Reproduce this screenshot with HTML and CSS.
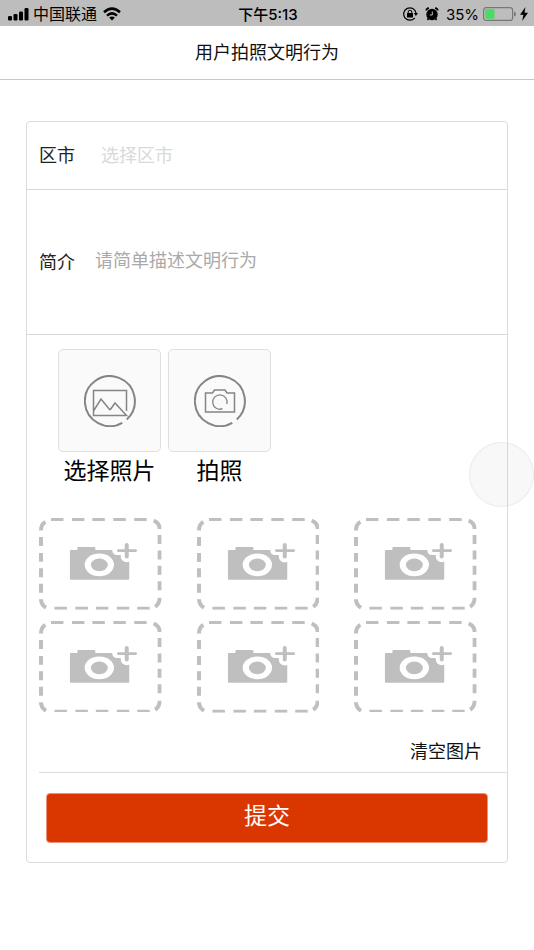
FILE: index.html
```html
<!DOCTYPE html>
<html lang="zh-CN">
<head>
<meta charset="utf-8">
<meta name="viewport" content="width=device-width, initial-scale=1">
<title>用户拍照文明行为</title>
<link rel="stylesheet" href="styles.css">
</head>
<body>
<svg class="defs" aria-hidden="true">
  <symbol id="slot" viewBox="0 0 123 92">
    <g fill="none" stroke="#bfbfbf">
      <path stroke-width="3" d="M12 1.500h12.500M33 1.500h12.500M53.500 1.500h12.500M74.500 1.500h12.500M95.500 1.500h12.500M15.500 90.500h12.500M36.500 90.500h12.500M57 90.500h12.500M78 90.500h12.500M98.500 90.500h12.500"/>
      <path stroke-width="4" d="M2 19v9M2 35v9M2 50.500v9M2 66v9M121 17v9M121 32.500v9M121 48v9M121 63.500v9"/>
      <path stroke-width="4" d="M6.500 4Q2 6 2 12.500M115 2.500Q121 5 121 11M121 80Q121 86 116.500 89M2 81.500Q2 87 7 90"/>
    </g>
    <path fill="#bfbfbf" d="M32 32h6.500v-2q0-1 1-1h16q1 0 1 1v2H89.500q1 0 1 1v28q0 1-1 1H32q-1 0-1-1V33q0-1 1-1z"/>
    <ellipse cx="60.500" cy="47" rx="14.700" ry="11.400" fill="#fff"/>
    <ellipse cx="60.500" cy="47" rx="8.500" ry="6.300" fill="#bfbfbf"/>
    <g fill="none" stroke-linecap="round">
      <path stroke="#fff" stroke-width="9" d="M78 32.700h20"/>
      <path stroke="#fff" stroke-width="12" d="M88 27v11.500"/>
      <path stroke="#bfbfbf" stroke-width="2.600" d="M79.500 32.700h17.500"/>
      <path stroke="#bfbfbf" stroke-width="4" d="M88 27v11.500"/>
    </g>
  </symbol>
</svg>

<div class="status">
  <div class="status-side">
    <svg width="21" height="14" viewBox="0 0 21 14" aria-hidden="true"><rect x="0" y="9" width="4" height="4.500" rx="1.200"/><rect x="5.500" y="7" width="4" height="6.500" rx="1.200"/><rect x="11" y="4.500" width="4" height="9" rx="1.200"/><rect x="16.500" y="1" width="4" height="12.500" rx="1.200"/></svg>
    <span class="carrier">中国联通</span>
    <svg class="wifi" width="18" height="14" viewBox="0 0 18 14" aria-hidden="true"><g fill="none" stroke="#000" stroke-width="2.500"><path d="M1 5.200Q9-2 17 5.200"/><path d="M4 8.700Q9 4 14 8.700"/></g><path d="M9 13.500L6.200 10.700Q9 8.400 11.800 10.700z"/></svg>
  </div>
  <time class="clock">下午5:13</time>
  <div class="status-side status-end">
    <svg width="15" height="14" viewBox="0 0 15 14" aria-hidden="true"><path d="M11.800 10.800A6.200 6.200 0 1 1 13 6" fill="none" stroke="#000" stroke-width="1.200"/><path d="M10.800 6H15l-2.100 3z"/><rect x="4" y="6" width="6" height="4.500" rx=".5"/><path d="M5.200 6.200V5a1.800 1.800 0 0 1 3.600 0v1.200" fill="none" stroke="#000"/></svg>
    <svg class="alarm" width="14" height="14" viewBox="0 0 14 14" aria-hidden="true"><circle cx="7" cy="7.500" r="5.700"/><path d="M1.300 3.500Q1.300 1.200 4 1.100M10 1.100Q12.700 1.200 12.700 3.500M3.500 11.500L2.500 13M10.500 11.500l1 1.500" fill="none" stroke="#000" stroke-width="1.700"/><path d="M7.300 4.500v3.500H4.800" fill="none" stroke="#bdbdbd"/></svg>
    <span class="percent">35%</span>
    <svg width="33" height="14" viewBox="0 0 33 14" aria-hidden="true"><rect x=".6" y=".6" width="29" height="12.800" rx="2.500" fill="none" stroke="#777" stroke-width="1.200"/><rect x="2.300" y="2.300" width="9.200" height="9.400" rx="1" fill="#4cd964"/><path d="M31 4.500q2 .5 2 2.500t-2 2.500z" fill="#777"/></svg>
    <svg width="8" height="14" viewBox="0 0 8 14" aria-hidden="true"><path d="M5.500 0L0 7.800h3.400L2.200 14 8 5.800H4.500z"/></svg>
  </div>
</div>

<header class="topbar"><h1>用户拍照文明行为</h1></header>

<main>
  <form class="card">
    <div class="row row-city">
      <label for="city">区市</label>
      <select id="city" class="city"><option>选择区市</option></select>
    </div>
    <div class="row row-intro">
      <label for="intro">简介</label>
      <textarea id="intro" class="intro" rows="3" placeholder="请简单描述文明行为"></textarea>
    </div>
    <div class="sources">
      <div class="source">
        <button type="button" class="tile" aria-labelledby="pick">
          <svg width="52" height="52" viewBox="0 0 52 52" fill="none" stroke="#858585" aria-hidden="true"><path stroke-width="2" d="M38.300 47.800A25 25 0 1 1 42.800 44.500"/><path stroke-width="1.500" d="M42.500 36V15.500H9.500V40.500H42.500L31 28l-5 7M9.500 36L17 24l9 11"/></svg>
        </button>
        <span id="pick">选择照片</span>
      </div>
      <div class="source">
        <button type="button" class="tile" aria-labelledby="shoot">
          <svg width="52" height="52" viewBox="0 0 52 52" fill="none" stroke="#858585" aria-hidden="true"><path stroke-width="2" d="M38.300 47.800A25 25 0 1 1 42.800 44.500"/><path stroke-width="1.500" d="M11.500 18H18.500l2-3h10.500l2 3H40.500V37H11.500z"/><path stroke-width="1.300" d="M28.500 33.700A7.200 7.200 0 1 1 32.800 29"/></svg>
        </button>
        <span id="shoot">拍照</span>
      </div>
    </div>
    <div class="slots">
      <svg viewBox="0 0 123 92" role="img"><use href="#slot"/></svg>
      <svg viewBox="0 0 123 92" role="img"><use href="#slot"/></svg>
      <svg viewBox="0 0 123 92" role="img"><use href="#slot"/></svg>
      <svg viewBox="0 0 123 92" role="img"><use href="#slot"/></svg>
      <svg viewBox="0 0 123 92" role="img"><use href="#slot"/></svg>
      <svg viewBox="0 0 123 92" role="img"><use href="#slot"/></svg>
    </div>
    <div class="clear-row"><button type="reset" class="clear">清空图片</button></div>
    <div class="submit-row"><button type="submit" class="submit">提交</button></div>
  </form>
</main>
<div class="touch"></div>
</body>
</html>
```

FILE: styles.css
```css
* { box-sizing: border-box; }

body {
  margin: 0;
  background: #fff;
  color: #111;
  font-family: "Liberation Sans", "Noto Sans CJK SC", sans-serif;
  font-size: 18px;
  overflow-x: hidden;
}

button, select, textarea {
  margin: 0;
  padding: 0;
  border: 0;
  background: none;
  color: inherit;
  font: inherit;
}

svg { display: block; flex: none; }
.defs { position: absolute; width: 0; height: 0; }

.status {
  display: grid;
  grid-template-columns: 1fr auto 1fr;
  align-items: center;
  height: 26px;
  padding: 0 6px 0 8px;
  background: #bdbdbd;
  color: #000;
  font-size: 16px;
  line-height: 26px;
}
.status-side { display: flex; align-items: center; gap: 4px; }
.carrier { padding-top: 2px; }
.status-end { justify-content: flex-end; }
.wifi { margin-left: 2px; }
.alarm { margin: 0 3px; }
.clock {
  padding-top: 2px;
  font-family: Inter, "Noto Sans CJK SC", sans-serif;
  font-size: 15px;
  font-weight: 500;
}
.percent { padding-top: 2px; font-family: Inter, sans-serif; font-size: 15px; }

.topbar {
  height: 54px;
  border-bottom: 1px solid #c8c8c8;
  text-align: center;
}
.topbar h1 { margin: 0; font-size: 18px; font-weight: 400; line-height: 54px; }

main { padding: 41px 26px; }

.card { border: 1px solid #dcdcde; border-radius: 4px; }

.row {
  display: flex;
  align-items: center;
  padding: 0 12px;
  border-bottom: 1px solid #d8d8da;
}
.row label { color: #222; line-height: 28px; }
.row-city { height: 68px; }
.row-intro { height: 145px; padding-top: 2px; }
.city {
  flex: 1;
  appearance: none;
  margin-left: 26px;
  color: #d9d9d9;
  line-height: 28px;
}
.intro {
  flex: 1;
  margin-left: 20px;
  height: 84px;
  padding: 26px 0;
  line-height: 28px;
  resize: none;
}
.intro::placeholder { color: #a9a9a9; opacity: 1; }

.sources { display: flex; gap: 7px; padding: 14px 31px 0; }
.source {
  display: flex;
  flex-direction: column;
  align-items: center;
  color: #000;
  font-size: 23px;
  line-height: 38px;
}
.tile {
  display: grid;
  place-items: center;
  width: 103px;
  height: 103px;
  border: 1px solid #dfdfdf;
  border-radius: 5px;
  background: #fafafa;
}

.slots {
  display: grid;
  grid-template-columns: repeat(3, 1fr);
  gap: 11px 35px;
  padding: 28px 30px 0 12px;
}
.slots svg { width: 100%; }

.clear-row {
  margin-left: 12px;
  padding: 25px 25px 6px 0;
  border-bottom: 1px solid #dcdcdc;
  text-align: right;
}
.clear { display: inline-block; line-height: 28px; vertical-align: top; }

.submit-row { padding: 20px 19px 19px; }
.submit {
  display: block;
  width: 100%;
  height: 50px;
  padding-bottom: 8px;
  border: 1px solid #f0917a;
  border-radius: 4px;
  background: #d93600;
  color: #fff;
  font-size: 23px;
}

.touch {
  position: fixed;
  top: 442px;
  right: 0;
  width: 65px;
  height: 65px;
  border: 1px solid rgba(0, 0, 0, .05);
  border-radius: 50%;
  background: rgba(128, 128, 128, .06);
  pointer-events: none;
}
```
